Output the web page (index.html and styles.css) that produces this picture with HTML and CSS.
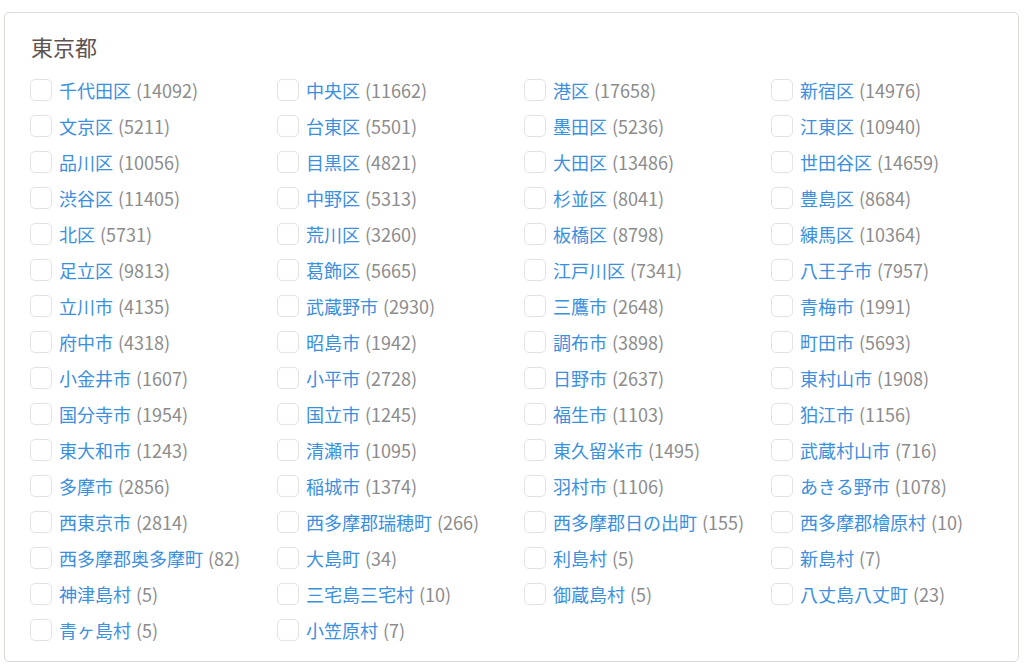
FILE: index.html
```html
<!DOCTYPE html>
<html lang="ja">
<head>
<meta charset="utf-8">
<title>東京都</title>
<link rel="stylesheet" href="styles.css">
</head>
<body>
<section class="card">
  <h2 class="title">東京都</h2>
  <div class="grid">
    <label class="item"><span class="box"></span><span class="name">千代田区</span><span class="count">(14092)</span></label>
    <label class="item"><span class="box"></span><span class="name">中央区</span><span class="count">(11662)</span></label>
    <label class="item"><span class="box"></span><span class="name">港区</span><span class="count">(17658)</span></label>
    <label class="item"><span class="box"></span><span class="name">新宿区</span><span class="count">(14976)</span></label>
    <label class="item"><span class="box"></span><span class="name">文京区</span><span class="count">(5211)</span></label>
    <label class="item"><span class="box"></span><span class="name">台東区</span><span class="count">(5501)</span></label>
    <label class="item"><span class="box"></span><span class="name">墨田区</span><span class="count">(5236)</span></label>
    <label class="item"><span class="box"></span><span class="name">江東区</span><span class="count">(10940)</span></label>
    <label class="item"><span class="box"></span><span class="name">品川区</span><span class="count">(10056)</span></label>
    <label class="item"><span class="box"></span><span class="name">目黒区</span><span class="count">(4821)</span></label>
    <label class="item"><span class="box"></span><span class="name">大田区</span><span class="count">(13486)</span></label>
    <label class="item"><span class="box"></span><span class="name">世田谷区</span><span class="count">(14659)</span></label>
    <label class="item"><span class="box"></span><span class="name">渋谷区</span><span class="count">(11405)</span></label>
    <label class="item"><span class="box"></span><span class="name">中野区</span><span class="count">(5313)</span></label>
    <label class="item"><span class="box"></span><span class="name">杉並区</span><span class="count">(8041)</span></label>
    <label class="item"><span class="box"></span><span class="name">豊島区</span><span class="count">(8684)</span></label>
    <label class="item"><span class="box"></span><span class="name">北区</span><span class="count">(5731)</span></label>
    <label class="item"><span class="box"></span><span class="name">荒川区</span><span class="count">(3260)</span></label>
    <label class="item"><span class="box"></span><span class="name">板橋区</span><span class="count">(8798)</span></label>
    <label class="item"><span class="box"></span><span class="name">練馬区</span><span class="count">(10364)</span></label>
    <label class="item"><span class="box"></span><span class="name">足立区</span><span class="count">(9813)</span></label>
    <label class="item"><span class="box"></span><span class="name">葛飾区</span><span class="count">(5665)</span></label>
    <label class="item"><span class="box"></span><span class="name">江戸川区</span><span class="count">(7341)</span></label>
    <label class="item"><span class="box"></span><span class="name">八王子市</span><span class="count">(7957)</span></label>
    <label class="item"><span class="box"></span><span class="name">立川市</span><span class="count">(4135)</span></label>
    <label class="item"><span class="box"></span><span class="name">武蔵野市</span><span class="count">(2930)</span></label>
    <label class="item"><span class="box"></span><span class="name">三鷹市</span><span class="count">(2648)</span></label>
    <label class="item"><span class="box"></span><span class="name">青梅市</span><span class="count">(1991)</span></label>
    <label class="item"><span class="box"></span><span class="name">府中市</span><span class="count">(4318)</span></label>
    <label class="item"><span class="box"></span><span class="name">昭島市</span><span class="count">(1942)</span></label>
    <label class="item"><span class="box"></span><span class="name">調布市</span><span class="count">(3898)</span></label>
    <label class="item"><span class="box"></span><span class="name">町田市</span><span class="count">(5693)</span></label>
    <label class="item"><span class="box"></span><span class="name">小金井市</span><span class="count">(1607)</span></label>
    <label class="item"><span class="box"></span><span class="name">小平市</span><span class="count">(2728)</span></label>
    <label class="item"><span class="box"></span><span class="name">日野市</span><span class="count">(2637)</span></label>
    <label class="item"><span class="box"></span><span class="name">東村山市</span><span class="count">(1908)</span></label>
    <label class="item"><span class="box"></span><span class="name">国分寺市</span><span class="count">(1954)</span></label>
    <label class="item"><span class="box"></span><span class="name">国立市</span><span class="count">(1245)</span></label>
    <label class="item"><span class="box"></span><span class="name">福生市</span><span class="count">(1103)</span></label>
    <label class="item"><span class="box"></span><span class="name">狛江市</span><span class="count">(1156)</span></label>
    <label class="item"><span class="box"></span><span class="name">東大和市</span><span class="count">(1243)</span></label>
    <label class="item"><span class="box"></span><span class="name">清瀬市</span><span class="count">(1095)</span></label>
    <label class="item"><span class="box"></span><span class="name">東久留米市</span><span class="count">(1495)</span></label>
    <label class="item"><span class="box"></span><span class="name">武蔵村山市</span><span class="count">(716)</span></label>
    <label class="item"><span class="box"></span><span class="name">多摩市</span><span class="count">(2856)</span></label>
    <label class="item"><span class="box"></span><span class="name">稲城市</span><span class="count">(1374)</span></label>
    <label class="item"><span class="box"></span><span class="name">羽村市</span><span class="count">(1106)</span></label>
    <label class="item"><span class="box"></span><span class="name">あきる野市</span><span class="count">(1078)</span></label>
    <label class="item"><span class="box"></span><span class="name">西東京市</span><span class="count">(2814)</span></label>
    <label class="item"><span class="box"></span><span class="name">西多摩郡瑞穂町</span><span class="count">(266)</span></label>
    <label class="item"><span class="box"></span><span class="name">西多摩郡日の出町</span><span class="count">(155)</span></label>
    <label class="item"><span class="box"></span><span class="name">西多摩郡檜原村</span><span class="count">(10)</span></label>
    <label class="item"><span class="box"></span><span class="name">西多摩郡奥多摩町</span><span class="count">(82)</span></label>
    <label class="item"><span class="box"></span><span class="name">大島町</span><span class="count">(34)</span></label>
    <label class="item"><span class="box"></span><span class="name">利島村</span><span class="count">(5)</span></label>
    <label class="item"><span class="box"></span><span class="name">新島村</span><span class="count">(7)</span></label>
    <label class="item"><span class="box"></span><span class="name">神津島村</span><span class="count">(5)</span></label>
    <label class="item"><span class="box"></span><span class="name">三宅島三宅村</span><span class="count">(10)</span></label>
    <label class="item"><span class="box"></span><span class="name">御蔵島村</span><span class="count">(5)</span></label>
    <label class="item"><span class="box"></span><span class="name">八丈島八丈町</span><span class="count">(23)</span></label>
    <label class="item"><span class="box"></span><span class="name">青ヶ島村</span><span class="count">(5)</span></label>
    <label class="item"><span class="box"></span><span class="name">小笠原村</span><span class="count">(7)</span></label>
  </div>
</section>
</body>
</html>
```

FILE: styles.css
```css
* { box-sizing: border-box; }

html, body {
  margin: 0;
  padding: 0;
  background: #ffffff;
}

body {
  padding: 12px 5px 9px 4px;
  font-family: "Noto Sans CJK JP", sans-serif;
}

.card {
  border: 1px solid #d9d9d6;
  border-radius: 5px;
  padding: 20px 0 13px 25px;
  height: 650px;
}

.title {
  margin: 0 0 13px 1px;
  font-weight: 400;
  font-size: 22px;
  line-height: 26px;
  color: #5e5451;
}

.grid {
  display: grid;
  grid-template-columns: repeat(4, 247px);
  grid-auto-rows: 36px;
}

.item {
  display: flex;
  align-items: center;
  font-size: 18px;
  line-height: 22px;
}

.box {
  flex: none;
  width: 22px;
  height: 22px;
  border: 1.5px solid #e3e3df;
  border-radius: 5px;
  margin-right: 7px;
}

.name {
  color: #3a8fde;
}

.count {
  color: #8c8c8c;
  margin-left: 5px;
}
```
